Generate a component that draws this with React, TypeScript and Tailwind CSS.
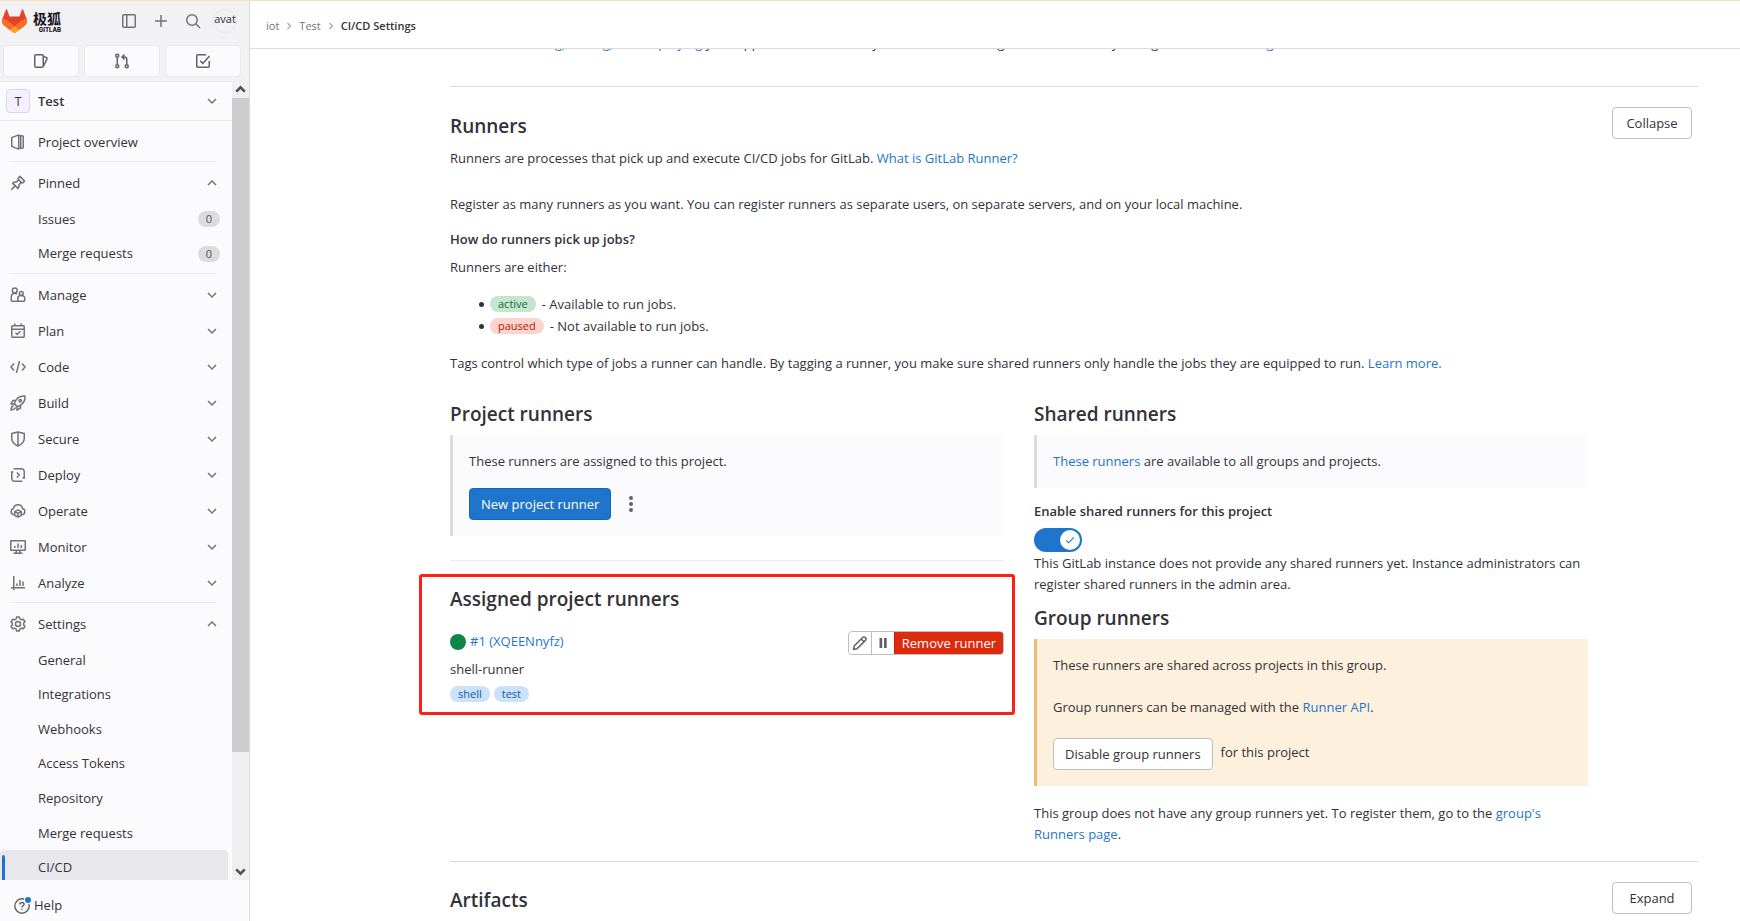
import type { ReactNode } from 'react';

type IconProps = { className?: string; children: ReactNode };

function Icon({ className = 'size-4', children }: IconProps) {
  return (
    <svg
      viewBox="0 0 16 16"
      className={`shrink-0 ${className}`}
      fill="none"
      stroke="currentColor"
      strokeWidth="1.5"
      aria-hidden="true"
    >
      {children}
    </svg>
  );
}

const icons = {
  sidebar: (
    <>
      <rect x="1.75" y="1.75" width="12.5" height="12.5" rx="1" />
      <path d="M5.75 2v12" />
    </>
  ),
  plus: <path d="M8 2v12M2 8h12" />,
  search: (
    <>
      <circle cx="7" cy="7" r="5.25" />
      <path d="M10.8 10.8 15 15" />
    </>
  ),
  issues: (
    <>
      <rect x="1.75" y="1.75" width="8.5" height="12.5" rx="1.25" />
      <path d="M10.5 3.5l2.9.9a1 1 0 0 1 .7 1.2l-3.6 7.6" />
    </>
  ),
  merge: (
    <>
      <circle cx="3.25" cy="2.75" r="1.5" />
      <circle cx="3.25" cy="13.25" r="1.5" />
      <circle cx="12.75" cy="13.25" r="1.5" />
      <path d="M3.25 4.5v7M12.75 11.5V6.25a2.25 2.25 0 0 0-2.25-2.25H8.5M10.5 1.5 8 4l2.5 2.5" />
    </>
  ),
  todo: (
    <>
      <path d="M14.25 8v5.25a1 1 0 0 1-1 1H2.75a1 1 0 0 1-1-1V2.75a1 1 0 0 1 1-1H11" />
      <path d="M5.2 7.8l2.6 2.6L14.6 3" />
    </>
  ),
  project: (
    <>
      <path d="M1.75 3.600 8.750.900v14.200L1.750 12.400z" strokeLinejoin="round" />
      <path d="M8.750 1.750h3.500a1 1 0 0 1 1 1v10.500a1 1 0 0 1-1 1h-3.500M10.750 2v12" />
    </>
  ),
  pin: (
    <>
      <path d="M1.200 14.800 5.600 10.400" />
      <path
        d="M2.600 8.100c1.200-1 2.600-1.400 3.600-1L8.600 4.700 8 3.400 9.900 1.400l4.700 4.700-2 1.900-1.300-.6-2.400 2.400c.4 1 0 2.400-1 3.600z"
        strokeLinejoin="round"
      />
      <path d="M8.600 4.700 11.300 7.400" />
    </>
  ),
  manage: (
    <>
      <circle cx="4.750" cy="3.500" r="2.400" />
      <path d="M7.700 14.250H2.250a1 1 0 0 1-1-1V9.500a3.300 3.300 0 0 1 5.600-2.300" />
      <circle cx="11.250" cy="6.500" r="1.900" />
      <path d="M7.750 14.250v-2.700a3.500 3 0 0 1 7 0v1.700a1 1 0 0 1-1 1z" />
    </>
  ),
  plan: (
    <>
      <rect x="1.750" y="2.750" width="12.500" height="11.500" rx="1" />
      <path d="M2 6.250h12M4.750.500v2.500M11.250.500v2.500M5.500 9.800l1.700 1.700 3.200-3.200" />
    </>
  ),
  code: <path d="M4 4.500.900 8 4 11.500M12 4.500 15.100 8 12 11.500M9.600 2 6.400 14" />,
  build: (
    <>
      <path
        d="M15 1c-4-.2-7 1-9.200 4.300L4.300 8.600l3.100 3.100 3.300-1.500C14 8 15.200 5 15 1z"
        strokeLinejoin="round"
      />
      <path d="M5.500 5.500H3L.900 8.900l3.300.2M10.500 10.500V13l-3.400 2.100-.2-3.300M3.600 10.500C1.800 11 1.200 12.500 1 15c2.500-.2 4-.8 4.500-2.600" />
      <circle cx="10.300" cy="5.700" r="1.200" />
    </>
  ),
  secure: (
    <path
      d="M8 .900 1.750 2.500v5c0 3.500 2.500 5.800 6.250 7.700 3.750-1.900 6.250-4.200 6.250-7.700v-5zM8 1v14"
      strokeLinejoin="round"
    />
  ),
  deploy: (
    <>
      <path d="M3.500 1.750h8a2.750 2.750 0 0 1 2.750 2.750v6.500M12.250 14.250H4.500a2.750 2.750 0 0 1-2.750-2.750V5" />
      <path d="M6.800 5.500 9.300 8l-2.500 2.500M14.250 10v1.500M1 5h2.500M14.900 11h-2.400" />
    </>
  ),
  operate: (
    <>
      <path d="M3.700 11.700A3.200 3.200 0 0 1 3.500 5.500a4.600 4.600 0 0 1 9 0 3.200 3.200 0 0 1-.2 6.200" />
      <path
        d="M8 6.900l3.300 1.700v3.800L8 14.200l-3.300-1.800V8.600zM4.900 8.700 8 10.400l3.100-1.700M8 10.400v3.600"
        strokeLinejoin="round"
      />
    </>
  ),
  monitor: (
    <>
      <rect x=".750" y="1.750" width="14.500" height="9.500" rx=".500" />
      <path d="M4.750 7v2M8 4.500V9M11.250 6v3M6.500 11.500 6 14M9.500 11.500l.5 2.500M3.500 14.250h9" />
    </>
  ),
  analyze: <path d="M3.750 1v14M1 12.750h14M7 8.500v2.500M10 5v6M13 6.500V11" />,
  settings: (
    <>
      <path
        d="M6.700 1h2.600l.5 1.900 1.500.8 1.900-.5L15 5.500 13.700 7v2l1.300 1.500-1.800 2.300-1.900-.5-1.500.8L9.300 15H6.700l-.5-1.900-1.500-.8-1.900.5L1 10.500 2.300 9V7L1 5.500l1.800-2.300 1.900.5 1.500-.8z"
        strokeLinejoin="round"
      />
      <circle cx="8" cy="8" r="2.500" />
    </>
  ),
  pencil: (
    <path
      d="M1.600 14.400l.6-3.400 8.700-8.700a1.400 1.400 0 0 1 2 0l.8.8a1.400 1.400 0 0 1 0 2L5 13.800zM9.300 4l2.700 2.700"
      strokeLinejoin="round"
    />
  ),
  down: <path d="M4 6l4 4 4-4" />,
  up: <path d="M4 10l4-4 4 4" />,
  right: <path d="M6 4l4 4-4 4" />,
  check: <path d="M3 8.500l3.200 3.200L13 4.500" />,
};

function TanukiLogo() {
  return (
    <svg viewBox="0 0 25 24" className="h-6 w-[25px] shrink-0" aria-hidden="true">
      <path
        d="M24.500 9.500 21 .500c-.2-.5-.9-.5-1 0L17.500 7.500h-10L5 .500c-.2-.5-.9-.5-1 0L.500 9.500a6.500 6.500 0 0 0 2.200 7.500l9.800 7.300 9.800-7.300a6.500 6.500 0 0 0 2.200-7.500z"
        fill="#E24329"
      />
      <path d="M24.500 9.500a12 12 0 0 0-4.700 2.100l-7.300 5.600 4.700 3.600 5.100-3.800a6.500 6.500 0 0 0 2.200-7.500z" fill="#FC6D26" />
      <path d="M7.800 20.800l4.700 3.500 4.700-3.500-4.700-3.600z" fill="#FCA326" />
      <path d="M5.200 11.600A12 12 0 0 0 .500 9.500a6.500 6.500 0 0 0 2.200 7.500l5.100 3.800 4.700-3.600z" fill="#FC6D26" />
    </svg>
  );
}

function Link({ children }: { children: ReactNode }) {
  return (
    <a href="#" className="text-[#1f75cb] hover:underline">
      {children}
    </a>
  );
}

function NavSection({ icon, label, open }: { icon: ReactNode; label: string; open?: boolean }) {
  return (
    <button type="button" className="flex h-9 w-full items-center pr-3 pl-[10px] text-left" aria-expanded={!!open}>
      <Icon className="size-4 text-[#737278]">{icon}</Icon>
      <span className="ml-3 flex-1">{label}</span>
      <Icon className="size-4 text-[#737278]">{open ? icons.up : icons.down}</Icon>
    </button>
  );
}

function Divider() {
  return <hr className="mt-px mr-4 mb-[3px] ml-[10px] border-[#ececef]" />;
}

const pinned = ['Issues', 'Merge requests'];

const sections: [string, ReactNode][] = [
  ['Manage', icons.manage],
  ['Plan', icons.plan],
  ['Code', icons.code],
  ['Build', icons.build],
  ['Secure', icons.secure],
  ['Deploy', icons.deploy],
  ['Operate', icons.operate],
  ['Monitor', icons.monitor],
  ['Analyze', icons.analyze],
];

const settings = ['General', 'Integrations', 'Webhooks', 'Access Tokens', 'Repository', 'Merge requests', 'CI/CD'];

const shortcuts: [string, ReactNode][] = [
  ['Issues', icons.issues],
  ['Merge requests', icons.merge],
  ['To-Do List', icons.todo],
];

function Sidebar() {
  return (
    <aside className="flex w-[250px] shrink-0 flex-col border-r border-[#dcdcde] bg-[#fbfafd]">
      <div className="flex h-20 shrink-0 flex-col justify-between bg-[#f2f1f4] pb-1">
        <div className="flex h-9 items-center pt-1 pr-3 pl-[2px]">
          <a href="#" className="flex items-center gap-[6px]" aria-label="极狐 GitLab">
            <TanukiLogo />
            <span className="flex flex-col items-end text-[#171321]">
              <span className="font-['Noto_Sans_CJK_SC',sans-serif] text-[14px] leading-4 font-bold">极狐</span>
              <span className="font-['Inter',sans-serif] text-[6px] leading-[7px] font-extrabold">GITLAB</span>
            </span>
          </a>
          <div className="ml-auto flex items-center text-[#737278]">
            <button type="button" aria-label="Toggle sidebar" className="grid size-8 place-items-center">
              <Icon>{icons.sidebar}</Icon>
            </button>
            <button type="button" aria-label="Create new" className="grid size-8 place-items-center">
              <Icon>{icons.plus}</Icon>
            </button>
            <button type="button" aria-label="Search" className="grid size-8 place-items-center">
              <Icon>{icons.search}</Icon>
            </button>
            <button
              type="button"
              aria-label="User menu"
              className="ml-1 flex size-6 justify-center rounded-full border border-[#e6e6ea] text-[11px] leading-[18px] text-[#333238]"
            >
              avat
            </button>
          </div>
        </div>
        <div className="grid grid-cols-3 gap-[5px] pr-2 pl-[3px]">
          {shortcuts.map(([label, icon]) => (
            <button
              key={label}
              type="button"
              aria-label={label}
              className="grid h-8 place-items-center rounded border border-[#e9e8ec] bg-[#fbfafd] text-[#626168]"
            >
              <Icon>{icon}</Icon>
            </button>
          ))}
        </div>
      </div>

      <div className="flex min-h-0 flex-1">
        <nav className="min-w-0 flex-1 overflow-hidden" aria-label="Project navigation">
          <button
            type="button"
            className="flex h-10 w-full items-center border-y border-[#e9e8ee] pr-3 pl-[6px] text-left font-semibold"
          >
            <span className="grid size-6 place-items-center rounded border border-[#dcd5f0] bg-[#f4f0ff] text-[12px] font-normal">
              T
            </span>
            <span className="ml-2 flex-1">Test</span>
            <Icon className="size-4 text-[#737278]">{icons.down}</Icon>
          </button>
          <a href="#" className="mt-[3px] flex h-9 items-center pl-[10px]">
            <Icon className="size-4 text-[#737278]">{icons.project}</Icon>
            <span className="ml-3">Project overview</span>
          </a>
          <Divider />
          <NavSection icon={icons.pin} label="Pinned" open />
          <ul className="mt-px mb-[2px] grid h-[69px] grid-rows-2">
            {pinned.map((label) => (
              <li key={label} className="grid">
                <a href="#" className="flex items-center justify-between pr-3 pl-[38px]">
                  {label}
                  <span className="rounded-full bg-[#dcdcde] px-2 text-[11px] leading-4 text-[#535158]">0</span>
                </a>
              </li>
            ))}
          </ul>
          <Divider />
          {sections.map(([label, icon]) => (
            <NavSection key={label} icon={icon} label={label} />
          ))}
          <Divider />
          <NavSection icon={icons.settings} label="Settings" open />
          <ul className="mt-px grid h-[242px] grid-rows-7">
            {settings.map((label) => (
              <li key={label} className="grid">
                {label === 'CI/CD' ? (
                  <a
                    href="#"
                    aria-current="page"
                    className="mr-1 flex items-center gap-[33px] rounded bg-[#e8e7ec] pl-[2px]"
                  >
                    <span className="h-[26px] w-[3px] rounded-full bg-[#1f75cb]" />
                    {label}
                  </a>
                ) : (
                  <a href="#" className="flex items-center pl-[38px]">
                    {label}
                  </a>
                )}
              </li>
            ))}
          </ul>
        </nav>
        <div className="flex w-[17px] flex-col items-center bg-[#f0f0f0] text-[#505050]" aria-hidden="true">
          <Icon className="h-[17px] w-[17px] stroke-[2.5]">{icons.up}</Icon>
          <div className="w-full flex-[654] bg-[#cdcdcd]" />
          <div className="flex-[111]" />
          <Icon className="h-[17px] w-[17px] stroke-[2.5]">{icons.down}</Icon>
        </div>
      </div>

      <div className="flex h-[41px] shrink-0 items-center pt-[10px] pl-[14px]">
        <button type="button" className="flex items-center gap-1">
          <span className="relative text-[#626168]">
            <Icon>
              <circle cx="8" cy="8" r="7.200" strokeWidth="1.400" />
              <path d="M5.900 6.400c0-1.200.9-2 2.100-2s2.100.8 2.100 1.900c0 1.500-2.100 1.600-2.100 3M8 10.400v1.400" />
            </Icon>
            <span className="absolute -top-px -right-px size-[6px] rounded-full bg-[#1f75cb] ring-1 ring-[#fbfafd]" />
          </span>
          Help
        </button>
      </div>
    </aside>
  );
}

function SectionHeading({ children }: { children: ReactNode }) {
  return <h4 className="text-[19px] leading-6 font-semibold">{children}</h4>;
}

function OutlineButton({ children, wide }: { children: ReactNode; wide?: boolean }) {
  return (
    <button
      type="button"
      className={`h-8 rounded border border-[#bfbfc3] bg-white text-center ${wide ? 'w-20' : 'px-[11px]'}`}
    >
      {children}
    </button>
  );
}

function StateItem({ badge, tone, children }: { badge: string; tone: string; children: ReactNode }) {
  return (
    <li className="flex items-center gap-[6px]">
      <span className="size-[5px] rounded-full bg-[#333238]" aria-hidden="true" />
      <span className={`rounded-full px-2 text-[11px] leading-4 ${tone}`}>{badge}</span>
      <span>{children}</span>
    </li>
  );
}

function ProjectRunners() {
  return (
    <div>
      <SectionHeading>Project runners</SectionHeading>
      <div className="mt-[9px] border-l-[3px] border-[#dcdcde] bg-[#fbfafd] p-4">
        <p>These runners are assigned to this project.</p>
        <div className="mt-4 flex items-center gap-3">
          <button type="button" className="h-8 rounded border border-[#1068bf] bg-[#1f75cb] px-[11px] text-white">
            New project runner
          </button>
          <button type="button" aria-label="More actions" className="text-[#626168]">
            <svg viewBox="0 0 16 16" className="size-4" fill="currentColor" aria-hidden="true">
              <circle cx="8" cy="2" r="2" />
              <circle cx="8" cy="8" r="2" />
              <circle cx="8" cy="14" r="2" />
            </svg>
          </button>
        </div>
      </div>
      <hr className="mt-6 border-[#ececef]" />
      <div className="relative mt-[26px]">
        <div className="pointer-events-none absolute -top-[13px] -right-[11px] -bottom-[13px] -left-[31px] rounded-[3px] border-[3px] border-[#ff2015]" />
        <SectionHeading>Assigned project runners</SectionHeading>
        <div className="mt-5 flex items-start justify-between">
          <div>
            <div className="flex items-center gap-1">
              <span className="size-4 rounded-full bg-[#108548]" role="img" aria-label="Online" />
              <Link>#1 (XQEENnyfz)</Link>
            </div>
            <p className="mt-[7px]">shell-runner</p>
            <div className="mt-[6px] flex gap-1 text-[11px] leading-4 text-[#0b5cad]">
              <span className="rounded-full bg-[#cbe2f9] px-2">shell</span>
              <span className="rounded-full bg-[#cbe2f9] px-2">test</span>
            </div>
          </div>
          <div className="flex h-6 overflow-hidden rounded border border-[#bfbfc3] text-[#626168]">
            <button
              type="button"
              aria-label="Edit"
              className="grid w-[23px] place-items-center border-r border-[#bfbfc3]"
            >
              <Icon>{icons.pencil}</Icon>
            </button>
            <button type="button" aria-label="Pause" className="grid w-[22px] place-items-center">
              <svg viewBox="0 0 16 16" className="size-4" fill="currentColor" aria-hidden="true">
                <path d="M4.500 3h2.700v10H4.500zM9 3h2.700v10H9z" />
              </svg>
            </button>
            <button
              type="button"
              className="-my-px -mr-px rounded-r border border-[#c91c00] bg-[#dd2b0e] px-[7px] text-white"
            >
              Remove runner
            </button>
          </div>
        </div>
      </div>
    </div>
  );
}

function SharedRunners() {
  return (
    <div>
      <SectionHeading>Shared runners</SectionHeading>
      <p className="mt-[9px] border-l-[3px] border-[#dcdcde] bg-[#fbfafd] p-4">
        <Link>These runners</Link> are available to all groups and projects.
      </p>
      <label className="mt-[13px] block w-fit font-semibold">
        Enable shared runners for this project
        <input type="checkbox" role="switch" defaultChecked className="peer sr-only" />
        <span className="mt-[6px] flex h-6 w-12 items-center justify-end rounded-full bg-[#1f75cb] p-[2px]">
          <span className="grid size-5 place-items-center rounded-full bg-white text-[#1f75cb]">
            <Icon className="size-3">{icons.check}</Icon>
          </span>
        </span>
      </label>
      <p className="mt-px">
        This GitLab instance does not provide any shared runners yet. Instance administrators can register shared
        runners in the admin area.
      </p>
      <div className="mt-[11px]">
        <SectionHeading>Group runners</SectionHeading>
      </div>
      <div className="mt-[9px] border-l-[3px] border-[#e9be74] bg-[#fdf1dd] p-4">
        <p>These runners are shared across projects in this group.</p>
        <p className="mt-[21px]">
          Group runners can be managed with the <Link>Runner API</Link>.
        </p>
        <div className="mt-5 flex gap-2">
          <OutlineButton>Disable group runners</OutlineButton>
          <span className="pt-1">for this project</span>
        </div>
      </div>
      <p className="mt-[17px]">
        This group does not have any group runners yet. To register them, go to the{' '}
        <Link>group&apos;s Runners page</Link>.
      </p>
    </div>
  );
}

export default function App() {
  return (
    <div className="flex h-screen flex-col overflow-hidden border-t border-[#f5e3b5] bg-white font-['Open_Sans','Noto_Sans_CJK_SC',sans-serif] text-[13px] leading-[21px] text-[#333238]">
      <div className="flex min-h-0 flex-1">
        <Sidebar />
        <div className="flex min-w-0 flex-1 flex-col">
          <header className="relative z-10 flex h-12 shrink-0 items-center border-b border-[#dcdcde] bg-white px-4 pt-[2px]">
            <nav aria-label="Breadcrumb">
              <ol className="flex items-center text-[11px] text-[#737278]">
                <li className="flex items-center">
                  <a href="#">iot</a>
                  <Icon className="mx-1 size-3 text-[#a4a3a8]">{icons.right}</Icon>
                </li>
                <li className="flex items-center">
                  <a href="#">Test</a>
                  <Icon className="mx-1 size-3 text-[#a4a3a8]">{icons.right}</Icon>
                </li>
                <li className="font-semibold text-[#333238]">
                  <a href="#">CI/CD Settings</a>
                </li>
              </ol>
            </nav>
          </header>

          <main className="min-h-0 flex-1 overflow-hidden pr-[42px] pl-[200px]">
            <p className="-mt-4 mb-8">
              <Link>Automate building, testing, and deploying</Link> your applications based on your continuous
              integration and delivery configuration. <Link>How do I get started?</Link>
            </p>

            <section className="border-t border-[#dcdcde]">
              <div className="flex items-start justify-between pt-5 pr-[6px]">
                <div className="pt-[7px]">
                  <SectionHeading>Runners</SectionHeading>
                  <p className="mt-[10px]">
                    Runners are processes that pick up and execute CI/CD jobs for GitLab.{' '}
                    <Link>What is GitLab Runner?</Link>
                  </p>
                </div>
                <OutlineButton wide>Collapse</OutlineButton>
              </div>
              <div className="pt-[25px] pr-[110px]">
                <p>
                  Register as many runners as you want. You can register runners as separate users, on separate
                  servers, and on your local machine.
                </p>
                <h5 className="mt-[14px] font-semibold">How do runners pick up jobs?</h5>
                <p className="mt-[7px]">Runners are either:</p>
                <ul className="mt-[15px] mb-4 pl-[29px] leading-[22px]">
                  <StateItem badge="active" tone="bg-[#c3e6cd] text-[#24663b]">
                    - Available to run jobs.
                  </StateItem>
                  <StateItem badge="paused" tone="bg-[#fdd4cd] text-[#ae1800]">
                    - Not available to run jobs.
                  </StateItem>
                </ul>
                <p>
                  Tags control which type of jobs a runner can handle. By tagging a runner, you make sure shared
                  runners only handle the jobs they are equipped to run. <Link>Learn more.</Link>
                </p>
                <div className="mt-7 mb-4 grid grid-cols-2 gap-[30px]">
                  <ProjectRunners />
                  <SharedRunners />
                </div>
              </div>
            </section>

            <section className="border-t border-[#dcdcde]">
              <div className="flex items-start justify-between pt-5 pr-[6px]">
                <div className="pt-[6px]">
                  <SectionHeading>Artifacts</SectionHeading>
                </div>
                <OutlineButton wide>Expand</OutlineButton>
              </div>
            </section>
          </main>
        </div>
      </div>
    </div>
  );
}
